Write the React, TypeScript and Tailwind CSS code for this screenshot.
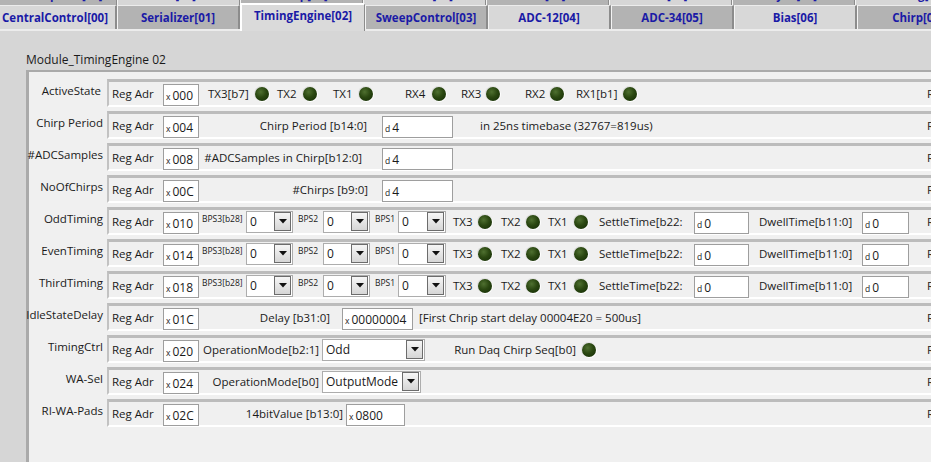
import React from "react";

const backTabs = [
  { label: "DataCapture[08]", dark: true },
  { label: "Rx[09]", dark: false },
  { label: "Temp[10]", dark: true },
  { label: "Power[11]", dark: false },
  { label: "PA[12]", dark: true },
  { label: "Tx[13]", dark: false },
  { label: "Sync[14]", dark: true },
  { label: "Debug[15]", dark: false },
];

const frontTabs = [
  { label: "CentralControl[00]", dark: false },
  { label: "Serializer[01]", dark: true },
  { label: "TimingEngine[02]", active: true },
  { label: "SweepControl[03]", dark: true },
  { label: "ADC-12[04]", dark: false },
  { label: "ADC-34[05]", dark: true },
  { label: "Bias[06]", dark: false },
  { label: "Chirp[07]", dark: true },
];

function Cell({ className, children }: { className: string; children: React.ReactNode }) {
  return (
    <div className={`shrink-0 flex items-center whitespace-nowrap text-[11.5px] text-[#1a1a1a] ${className}`}>
      {children}
    </div>
  );
}

function Small({ className, children }: { className: string; children: React.ReactNode }) {
  return (
    <div className={`shrink-0 flex items-center self-start pt-[3px] whitespace-nowrap text-[8.5px] text-[#1a1a1a] ${className}`}>
      {children}
    </div>
  );
}

function Led() {
  return (
    <div className="shrink-0 w-[16px] h-[16px] rounded-full bg-[radial-gradient(circle_at_60%_60%,#ffffff_45%,#b8b8b8_100%)] flex items-center justify-center">
      <div className="w-[14px] h-[14px] rounded-full bg-[radial-gradient(circle_at_40%_35%,#4f7030_0%,#2a4711_45%,#132a05_100%)]" />
    </div>
  );
}

function Field({ className, pre, val }: { className: string; pre: string; val: string }) {
  return (
    <div className={`shrink-0 h-[22px] mt-[2px] bg-white border border-[#9e9e9e] flex items-baseline pl-[2px] pt-[2px] ${className}`}>
      <span className="text-[8.5px] text-[#1a1a1a] mr-[2px]">{pre}</span>
      <span className="text-[12px] text-[#1a1a1a]">{val}</span>
    </div>
  );
}

function Drop({ className, val }: { className: string; val: string }) {
  return (
    <div className={`shrink-0 h-[22px] bg-white border border-[#adadad] flex items-center pl-[3px] pr-[1px] ${className}`}>
      <span className="flex-1 text-[12px] text-[#1a1a1a] whitespace-nowrap">{val}</span>
      <div className="w-[17px] h-[19px] border border-[#6c6c6c] bg-gradient-to-b from-[#f6f6f6] to-[#d6d6d6] flex items-center justify-center">
        <svg width="8" height="5" viewBox="0 0 8 5">
          <polygon points="0,0 8,0 4,4.5" fill="#111" />
        </svg>
      </div>
    </div>
  );
}

function Row({ label, labelPad, addr, children }: { label: string; labelPad?: string; addr: string; children?: React.ReactNode }) {
  return (
    <div className="flex h-[32px] items-start">
      <div className={`w-[74px] h-[28px] shrink-0 flex items-center justify-end pb-[4px] whitespace-nowrap text-[11.5px] text-[#1a1a1a] ${labelPad ?? ""}`}>
        {label}
      </div>
      <div className="ml-[4px] w-[880px] h-[28px] shrink-0 flex items-center border-t-[3px] border-t-[#bcbcbc] border-l-2 border-l-[#c2c2c2] border-b-2 border-b-white bg-[#f0f0f0]">
        <div className="flex flex-1 items-center h-full">
          <Cell className="w-[54px] pl-[3px]">Reg Adr</Cell>
          <Field className="w-[36px]" pre="x" val={addr} />
          {children}
        </div>
        <Cell className="w-[60px]">Read</Cell>
      </div>
    </div>
  );
}

function TimingRow({ label, addr }: { label: string; addr: string }) {
  return (
    <Row label={label} addr={addr}>
      <Small className="w-[47px] pl-[3px]">BPS3[b28]</Small>
      <Drop className="w-[47px]" val="0" />
      <Small className="w-[30px] pl-[5px]">BPS2</Small>
      <Drop className="w-[47px]" val="0" />
      <Small className="w-[28px] pl-[5px]">BPS1</Small>
      <Drop className="w-[48px]" val="0" />
      <Cell className="w-[31px] pl-[7px]">TX3</Cell>
      <Led />
      <Cell className="w-[32px] pl-[8px]">TX2</Cell>
      <Led />
      <Cell className="w-[32px] pl-[7px]">TX1</Cell>
      <Led />
      <Cell className="w-[105px] pl-[10px]">SettleTime[b22:</Cell>
      <Field className="w-[55px]" pre="d" val="0" />
      <Cell className="w-[113px] pl-[10px]">DwellTime[b11:0]</Cell>
      <Field className="w-[47px]" pre="d" val="0" />
    </Row>
  );
}

export default function App() {
  return (
    <div className="w-[931px] h-[462px] overflow-hidden bg-[#d6d6d6] font-['Open_Sans',sans-serif]">
      {/* back tab row, only its lower edge shows */}
      <div className="h-[5px] flex ml-[-6px] overflow-hidden">
        {backTabs.map((t) => (
          <div
            key={t.label}
            className={`w-[123px] h-[5px] shrink-0 flex items-end justify-center border-r border-r-[#8c8c8c] border-l border-l-[#f4f4f4] ${t.dark ? "bg-[#b3b3b3]" : "bg-[#d6d6d6]"}`}
          >
            <span className="mb-[3px] leading-[14px] text-[11.5px] font-bold text-[#1a1aa6] whitespace-nowrap">{t.label}</span>
          </div>
        ))}
      </div>

      {/* front tab row */}
      <div className="h-[24px] flex items-start ml-[-6px]">
        {frontTabs.map((t) =>
          t.active ? (
            <div
              key={t.label}
              className="relative z-10 -mt-[2px] w-[125px] h-[28px] shrink-0 flex justify-center pt-[3px] bg-[#dadada] border-t-2 border-t-white border-l-2 border-l-white border-r border-r-[#8c8c8c]"
            >
              <span className="text-[11.5px] leading-[16px] font-bold text-[#1a1aa6] whitespace-nowrap">{t.label}</span>
            </div>
          ) : (
            <div
              key={t.label}
              className={`w-[123px] h-[24px] shrink-0 flex items-center justify-center pt-[1px] border-t border-t-[#ececec] border-l border-l-[#f4f4f4] border-r-2 border-r-[#8c8c8c] ${t.dark ? "bg-[#b3b3b3]" : "bg-[#d8d8d8]"}`}
            >
              <span className="text-[11.5px] font-bold text-[#1a1aa6] whitespace-nowrap">{t.label}</span>
            </div>
          )
        )}
      </div>

      {/* tab page */}
      <div className="border-t-2 border-t-[#ececec] h-[433px]">
        <div className="ml-[26px] mt-[21px] h-[16px] leading-[16px] text-[12px] text-[#1a1a1a]">Module_TimingEngine 02</div>
        <div className="ml-[26px] mt-[2px] h-[400px] border-t-2 border-l-[3px] border-[#aaaaaa] bg-[#f0f0f0] pt-[7px]">
          <Row label="ActiveState" labelPad="pr-[2px]" addr="000">
            <Cell className="w-[55px] pl-[9px]">TX3[b7]</Cell>
            <Led />
            <Cell className="w-[32px] pl-[7px]">TX2</Cell>
            <Led />
            <Cell className="w-[40px] pl-[15px]">TX1</Cell>
            <Led />
            <Cell className="w-[57px] pl-[31px]">RX4</Cell>
            <Led />
            <Cell className="w-[38px] pl-[14px]">RX3</Cell>
            <Led />
            <Cell className="w-[48px] pl-[24px]">RX2</Cell>
            <Led />
            <Cell className="w-[57px] pl-[11px]">RX1[b1]</Cell>
            <Led />
          </Row>

          <Row label="Chirp Period" addr="004">
            <Cell className="w-[183px] justify-end pr-[15px]">Chirp Period [b14:0]</Cell>
            <Field className="w-[71px]" pre="d" val="4" />
            <Cell className="pl-[27px]">in 25ns timebase (32767=819us)</Cell>
          </Row>

          <Row label="#ADCSamples" addr="008">
            <Cell className="w-[183px] justify-end pr-[20px]">#ADCSamples in Chirp[b12:0]</Cell>
            <Field className="w-[71px]" pre="d" val="4" />
          </Row>

          <Row label="NoOfChirps" addr="00C">
            <Cell className="w-[183px] justify-end pr-[14px]">#Chirps [b9:0]</Cell>
            <Field className="w-[71px]" pre="d" val="4" />
          </Row>

          <TimingRow label="OddTiming" addr="010" />
          <TimingRow label="EvenTiming" addr="014" />
          <TimingRow label="ThirdTiming" addr="018" />

          <Row label="IdleStateDelay" addr="01C">
            <Cell className="w-[143px] justify-end pr-[12px]">Delay [b31:0]</Cell>
            <Field className="w-[71px]" pre="x" val="00000004" />
            <Cell className="pl-[6px]">[First Chrip start delay 00004E20 = 500us]</Cell>
          </Row>

          <Row label="TimingCtrl" addr="020">
            <Cell className="w-[123px] justify-end pr-[3px]">OperationMode[b2:1]</Cell>
            <Drop className="w-[103px]" val="Odd" />
            <Cell className="w-[156px] justify-end pr-[5px]">Run Daq Chirp Seq[b0]</Cell>
            <Led />
          </Row>

          <Row label="WA-Sel" addr="024">
            <Cell className="w-[123px] justify-end pr-[3px]">OperationMode[b0]</Cell>
            <Drop className="w-[99px]" val="OutputMode" />
          </Row>

          <Row label="RI-WA-Pads" addr="02C">
            <Cell className="w-[147px] justify-end pr-[3px]">14bitValue [b13:0]</Cell>
            <Field className="w-[59px]" pre="x" val="0800" />
          </Row>
        </div>
      </div>
    </div>
  );
}
